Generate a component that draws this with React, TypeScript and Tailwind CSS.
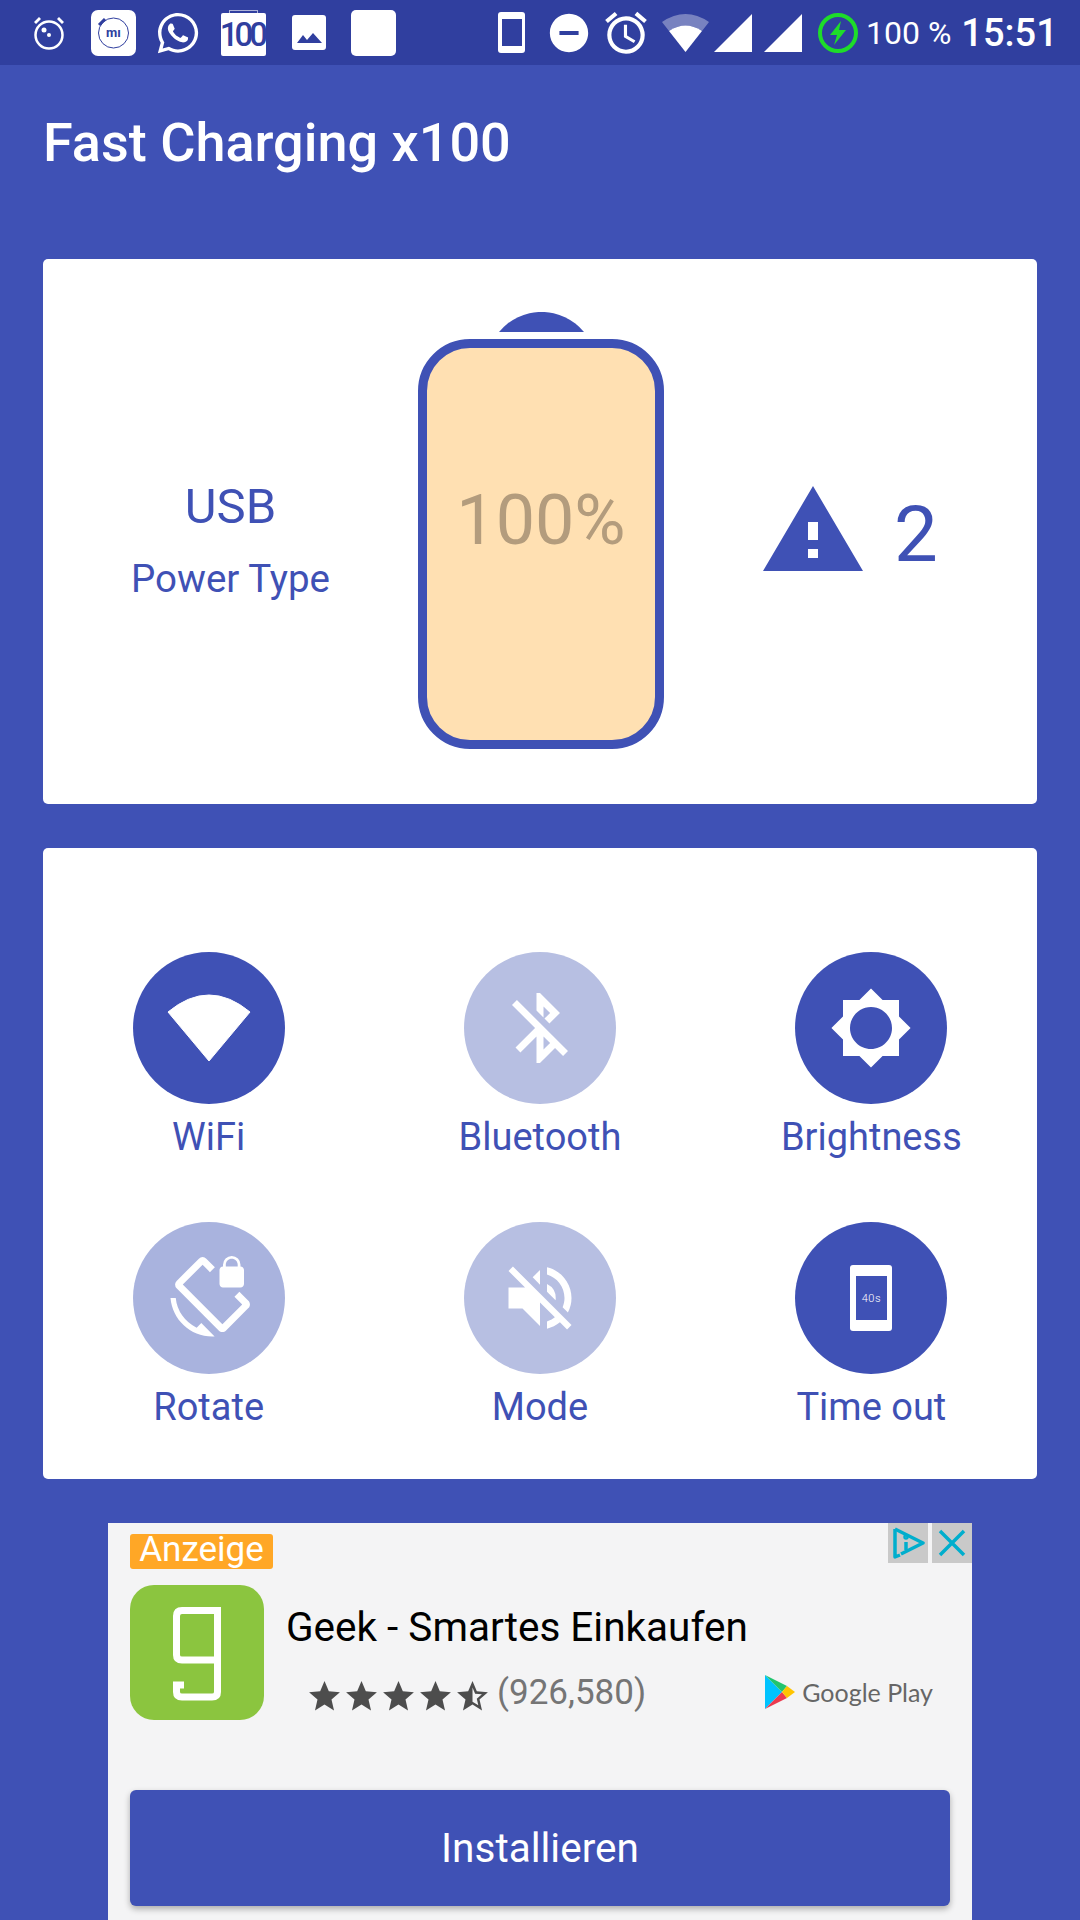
import React from "react";
import {
  MdAccessAlarm,
  MdBluetoothDisabled,
  MdBrightness5,
  MdDoNotDisturbOn,
  MdScreenLockRotation,
  MdStar,
  MdStarHalf,
  MdVolumeOff,
} from "react-icons/md";
import { FaWhatsapp } from "react-icons/fa";

const LeftAlarm = () => (
  <svg width="32" height="34" viewBox="0 0 32 34" className="ml-[33px]">
    <circle cx="16" cy="19" r="13.5" fill="none" stroke="white" strokeWidth="2.5" />
    <circle cx="11" cy="14" r="2.5" fill="white" />
    <circle cx="16" cy="19" r="2" fill="white" />
    <path d="M1 6 L6 1 L8 3 L3 8Z M31 6 L26 1 L24 3 L29 8Z" fill="white" />
  </svg>
);

const MiIcon = () => (
  <div className="ml-[26px] w-[45px] h-[46px] bg-white rounded-[7px] relative flex items-center justify-center">
    <svg width="45" height="46" viewBox="0 0 45 46" className="absolute inset-0">
      <circle cx="22.5" cy="23" r="15" fill="none" stroke="#303f9f" strokeWidth="1" />
      <path d="M8 15 L14 9" stroke="#303f9f" strokeWidth="3" />
    </svg>
    <span className="text-[#303f9f] text-[13px] font-bold leading-none">mı</span>
  </div>
);

const HundredIcon = () => (
  <div className="ml-[21px] w-[45px] h-[46px] relative">
    <div className="absolute left-[8px] top-0 w-[29px] h-[4px] border border-b-0 border-white/60" />
    <div className="absolute left-0 top-[3px] w-[45px] h-[43px] bg-white rounded-[2px] flex items-center justify-center overflow-hidden">
      <span className="text-[#303f9f] text-[33px] font-medium leading-none tracking-[-4px] pr-[3px]">100</span>
    </div>
  </div>
);

const ImageIcon = () => (
  <svg width="34" height="36" viewBox="0 0 34 36" className="ml-[26px]">
    <rect width="34" height="35" rx="3" fill="white" />
    <path d="M5 28 L11 20 L15 25 L21 18 L30 28Z" fill="#303f9f" />
  </svg>
);

const StatusBar = () => (
  <div className="h-[65px] bg-[#303f9f] flex items-center text-white">
    <LeftAlarm />
    <MiIcon />
    <div className="ml-[20px] w-[44px] h-[46px] flex items-center justify-center">
      <FaWhatsapp size={46} color="white" />
    </div>
    <HundredIcon />
    <ImageIcon />
    <div className="ml-[25px] w-[45px] h-[46px] bg-white rounded-[5px]" />
    <div className="ml-[102px] w-[27px] h-[41px] bg-white rounded-[3px] flex items-center justify-center">
      <div className="w-[20px] h-[27px] bg-[#303f9f]" />
    </div>
    <div className="ml-[21px] w-[46px] flex justify-center">
      <MdDoNotDisturbOn size={46} color="white" />
    </div>
    <div className="ml-[15px] w-[38px] flex justify-center">
      <MdAccessAlarm size={50} color="white" className="shrink-0" />
    </div>
    <svg width="47" height="38" viewBox="0 0 47 38" className="ml-[17px]">
      <path d="M0 8 Q23.5 -8 47 8 L40 17 Q23.5 6 7 17Z" fill="white" fillOpacity="0.35" />
      <path d="M7 17 Q23.5 6 40 17 L23.5 38Z" fill="white" />
    </svg>
    <svg width="38" height="38" viewBox="0 0 38 38" className="ml-[5px]">
      <path d="M0 38 L38 0 V38Z" fill="white" />
    </svg>
    <svg width="38" height="38" viewBox="0 0 38 38" className="ml-[12px]">
      <path d="M0 38 L38 0 V38Z" fill="white" />
    </svg>
    <svg width="40" height="40" viewBox="0 0 40 40" className="ml-[16px]">
      <ellipse cx="20" cy="20" rx="18" ry="18" fill="none" stroke="#1edc2a" strokeWidth="4" />
      <path d="M23 8 L12 22 H19 L16 32 L28 17 H21Z" fill="#1edc2a" />
    </svg>
    <span className="ml-[8px] text-[32px] leading-none whitespace-nowrap">100 %</span>
    <span className="ml-[10px] text-[38px] font-medium leading-none whitespace-nowrap">15:51</span>
  </div>
);

const BatteryCard = () => (
  <div className="bg-white rounded-[5px] h-[545px] flex items-start text-[#3f51b5]">
    <div className="w-[375px] mt-[220px] flex flex-col items-center">
      <span className="text-[49px] leading-[56px]">USB</span>
      <span className="text-[38.5px] leading-[44px] mt-[22px]">Power Type</span>
    </div>
    <div className="w-[246px] mt-[53px] flex flex-col items-center">
      <svg width="85" height="20" viewBox="0 0 85 20">
        <path d="M0 20 A55 55 0 0 1 85 20Z" fill="#3f51b5" />
      </svg>
      <div className="mt-[7px] w-[246px] h-[410px] rounded-[52px] border-[9px] border-[#3f51b5] bg-[#ffe0b2] flex justify-center pt-[132px]">
        <span className="text-[70px] leading-[80px] text-[#b39c7d]">100%</span>
      </div>
    </div>
    <div className="flex-1 mt-[227px] pl-[99px] flex items-start gap-[31px]">
      <svg width="100" height="85" viewBox="0 0 100 85">
        <path
          fillRule="evenodd"
          d="M0 85 L50 0 L100 85Z M45 36 V54 H55 V36Z M45 63 V72 H55 V63Z"
          fill="#3f51b5"
        />
      </svg>
      <span className="text-[78px] leading-[90px] mt-[4px]">2</span>
    </div>
  </div>
);

const TimeoutPhone = () => (
  <div className="w-[42px] h-[66px] bg-white rounded-[3px] flex items-center justify-center">
    <div className="w-[31px] h-[44px] bg-[#3f51b5] flex items-center justify-center">
      <span className="text-white text-[11px] font-light tracking-[0.5px] leading-none">40s</span>
    </div>
  </div>
);

const WifiWedge = () => (
  <svg width="152" height="152" viewBox="0 0 152 152">
    <path d="M35 60 Q76 26 117 60 L76 109Z" fill="white" stroke="white" strokeWidth="1" strokeLinejoin="round" />
  </svg>
);

const controls = [
  { label: "WiFi", tone: "bg-[#3f51b5]", icon: <WifiWedge /> },
  { label: "Bluetooth", tone: "bg-[#b7bfe2]", icon: <MdBluetoothDisabled size={84} color="white" /> },
  { label: "Brightness", tone: "bg-[#3f51b5]", icon: <MdBrightness5 size={84} color="white" /> },
  { label: "Rotate", tone: "bg-[#a9b3de]", icon: <MdScreenLockRotation size={84} color="white" /> },
  { label: "Mode", tone: "bg-[#b7bfe2]", icon: <MdVolumeOff size={84} color="white" /> },
  { label: "Time out", tone: "bg-[#3f51b5]", icon: <TimeoutPhone /> },
];

const ControlsCard = () => (
  <div className="mt-[44px] bg-white rounded-[5px] h-[631px] pt-[104px] grid grid-cols-3 content-start gap-y-[118px] text-[#3f51b5]">
    {controls.map((c) => (
      <div key={c.label} className="flex flex-col items-center h-[152px]">
        <div className={`w-[152px] h-[152px] shrink-0 rounded-full flex items-center justify-center ${c.tone}`}>
          {c.icon}
        </div>
        <span className="text-[38px] leading-[44px] mt-[11px] whitespace-nowrap">{c.label}</span>
      </div>
    ))}
  </div>
);

const PlayLogo = () => (
  <svg width="30" height="34" viewBox="0 0 30 34">
    <path d="M0 0 V34 L17 17Z" fill="#00c3ff" />
    <path d="M0 0 L17 17 L22 11Z" fill="#22c46f" />
    <path d="M0 34 L17 17 L22 23Z" fill="#ec3a4f" />
    <path d="M22 11 L30 17 L22 23 L17 17Z" fill="#ffc400" />
  </svg>
);

const AdCard = () => (
  <div className="mt-[44px] mx-[108px] h-[397px] bg-[#f4f4f5] relative px-[22px] pt-[11px]">
    <div className="absolute top-0 right-0 flex gap-[4px]">
      <div className="w-[40px] h-[40px] bg-[#c9c9c9] flex items-center justify-center">
        <svg width="34" height="34" viewBox="0 0 34 34" fill="none" stroke="#00aecd" strokeWidth="3.5" strokeLinejoin="round">
          <path d="M4 3 L32 17 L10 28" />
          <path d="M4 3 V31 L9 29" />
          <path d="M15 16 V24" />
          <circle cx="15" cy="11" r="1" fill="#00aecd" />
        </svg>
      </div>
      <div className="w-[40px] h-[40px] bg-[#c9c9c9] flex items-center justify-center">
        <svg width="28" height="28" viewBox="0 0 28 28" stroke="#00aecd" strokeWidth="3.5">
          <path d="M2 2 L26 26 M26 2 L2 26" />
        </svg>
      </div>
    </div>
    <div className="w-[143px] h-[35px] pb-[4px] bg-[#ffa726] rounded-[3px] flex items-center justify-center text-white text-[35px] leading-none">
      Anzeige
    </div>
    <div className="mt-[16px] flex items-start">
      <div className="w-[134px] h-[135px] shrink-0 bg-[#8bc53f] rounded-[24px]">
        <svg width="134" height="135" viewBox="0 0 134 135" fill="none" stroke="white" strokeWidth="7">
          <path d="M87.5 25.5 H52 Q46.5 25.5 46.5 31 V70 Q46.5 75 52 75 H87.5" />
          <path d="M54 100 H46.5 V107 Q46.5 112 52 112 H82 Q87.5 112 87.5 107 V22" />
        </svg>
      </div>
      <div className="flex-1 ml-[22px]">
        <div className="text-[40.5px] leading-[50px] mt-[17px] text-black whitespace-nowrap">Geek - Smartes Einkaufen</div>
        <div className="mt-[20px] flex items-start">
          <div className="ml-[20px] mt-[6px] flex text-[#4d4d4d]">
            <MdStar size={37} />
            <MdStar size={37} />
            <MdStar size={37} />
            <MdStar size={37} />
            <MdStarHalf size={37} />
          </div>
          <span className="ml-[6px] text-[35px] leading-[42px] text-[#757575]">(926,580)</span>
          <div className="ml-auto mr-[17px] mt-[3px] flex items-center gap-[7px]">
            <PlayLogo />
            <span className="font-['Lato',sans-serif] text-[25px] leading-none text-[#666666] whitespace-nowrap">Google Play</span>
          </div>
        </div>
      </div>
    </div>
    <div className="mt-[70px] h-[116px] bg-[#3f51b5] rounded-[6px] shadow-[0_3px_6px_rgba(0,0,0,0.3)] flex items-center justify-center text-white text-[40.5px]">
      Installieren
    </div>
  </div>
);

export default function App() {
  return (
    <div className="w-[1080px] h-[1920px] overflow-hidden bg-[#3f51b5] font-['Roboto',sans-serif]">
      <StatusBar />
      <div className="h-[194px] pl-[43px] pt-[47px] text-white text-[54px] font-medium leading-[62px]">
        Fast Charging x100
      </div>
      <div className="mx-[43px]">
        <BatteryCard />
        <ControlsCard />
      </div>
      <AdCard />
    </div>
  );
}
